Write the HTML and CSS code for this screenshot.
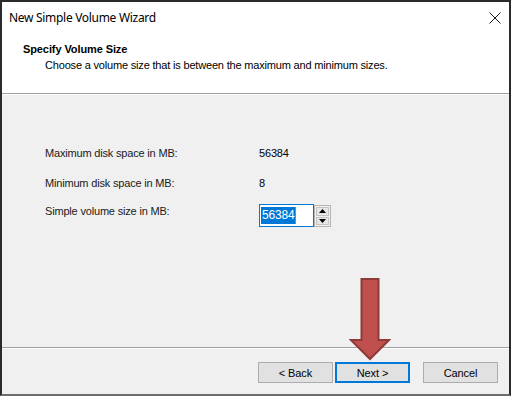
FILE: index.html
```html
<!DOCTYPE html>
<html lang="en">
<head>
    <meta charset="UTF-8">
    <title>New Simple Volume Wizard</title>
    <link rel="stylesheet" href="styles.css">
</head>
<body>
    <div class="window">
        <div class="titlebar">
            <span class="title">New Simple Volume Wizard</span>
            <svg class="close" width="12" height="12" viewBox="0 0 12 12">
                <path d="M0.5 0.5 L11.5 11.5 M11.5 0.5 L0.5 11.5" stroke="#1a1a1a" stroke-width="1" fill="none"/>
            </svg>
        </div>

        <div class="header">
            <h1>Specify Volume Size</h1>
            <p>Choose a volume size that is between the maximum and minimum sizes.</p>
        </div>

        <div class="content">
            <div class="row">
                <span class="label">Maximum disk space in MB:</span>
                <span class="value">56384</span>
            </div>
            <div class="row">
                <span class="label">Minimum disk space in MB:</span>
                <span class="value">8</span>
            </div>
            <div class="row row-input">
                <span class="label">Simple volume size in MB:</span>
                <div class="spinner">
                    <div class="field"><span class="selected">56384</span><span class="caret"></span></div>
                    <div class="spin-buttons">
                        <span class="spin-btn">
                            <svg width="7" height="4" viewBox="0 0 7 4"><path d="M3.5 0 L7 4 H0 Z" fill="#000"/></svg>
                        </span>
                        <span class="spin-btn">
                            <svg width="7" height="4" viewBox="0 0 7 4"><path d="M0 0 H7 L3.5 4 Z" fill="#000"/></svg>
                        </span>
                    </div>
                </div>
            </div>
        </div>

        <div class="footer">
            <button class="btn">&lt; Back</button>
            <button class="btn btn-default">Next &gt;</button>
            <button class="btn btn-cancel">Cancel</button>
        </div>

        <!-- callout arrow pointing at Next -->
        <svg class="arrow" width="42" height="86" viewBox="0 0 42 86">
            <path d="M12.5 2 H29.5 V63 H40 L21 82 L2 63 H12.5 Z" fill="#c0504d" stroke="#8e3a38" stroke-width="2" stroke-linejoin="miter"/>
        </svg>
    </div>
</body>
</html>
```

FILE: styles.css
```css
* {
    margin: 0;
    padding: 0;
    box-sizing: border-box;
}

body {
    font-family: 'Liberation Sans', Arial, sans-serif;
    font-size: 11px;
    letter-spacing: -0.18px;
    color: #000;
    background-color: #2b2b2b;
}

.window {
    position: relative;
    width: 511px;
    height: 396px;
    display: flex;
    flex-direction: column;
    background-color: #f0f0f0;
    border-top: 2px solid #2b2b2b;
    border-left: 2px solid #2b2b2b;
    border-right: 2px solid #2b2b2b;
    border-bottom: 2px solid #6d6d6d;
}

.titlebar {
    height: 30px;
    display: flex;
    align-items: center;
    justify-content: space-between;
    padding: 0 8px 0 7px;
    background-color: #fff;
}

.title {
    font-family: 'Noto Sans', 'Open Sans', sans-serif;
    font-size: 12px;
    letter-spacing: -0.3px;
    color: #000;
}

.close {
    display: block;
    margin-top: 1px;
}

.header {
    height: 62px;
    padding: 10px 0 0 21px;
    background-color: #fff;
    border-bottom: 1px solid #a0a0a0;
}

.header h1 {
    font-size: 11px;
    font-weight: bold;
    line-height: 14px;
    letter-spacing: -0.1px;
}

.header p {
    margin-top: 2px;
    padding-left: 22px;
    line-height: 14px;
}

.content {
    flex: 1;
    padding: 51px 0 0 43px;
    border-top: 1px solid #fff;
}

.row {
    display: flex;
    line-height: 14px;
    margin-bottom: 16px;
}

.label {
    width: 214px;
    color: #1a1a1a;
}

.row-input {
    margin-top: -2px;
}

.row-input .label {
    padding-top: 0;
}

.spinner {
    display: flex;
    align-items: flex-start;
}

.field {
    width: 55px;
    height: 23px;
    border: 1px solid #0078d7;
    background-color: #fff;
    padding: 2px 0 0 1px;
    display: flex;
    align-items: flex-start;
}

.selected {
    background-color: #0078d7;
    color: #fff;
    font-size: 12px;
    line-height: 17px;
    padding: 0 1px;
}

.caret {
    width: 1px;
    height: 17px;
    background-color: #e07020;
}

.spin-buttons {
    width: 17px;
    height: 22px;
    margin-top: 1px;
    border: 1px solid #b4b4b4;
    background-color: #f0f0f0;
    display: flex;
    flex-direction: column;
    gap: 1px;
    padding: 1px;
}

.spin-btn {
    flex: 1;
    display: flex;
    align-items: center;
    justify-content: center;
    background-color: #e6e6e6;
    border: 1px solid #c4c4c4;
}

.footer {
    height: 47px;
    display: flex;
    justify-content: flex-end;
    align-items: flex-start;
    padding: 14px 11px 0 0;
    border-top: 1px solid #a0a0a0;
    box-shadow: inset 0 1px 0 #fff;
}

.btn {
    width: 75px;
    height: 21px;
    font-family: 'Liberation Sans', Arial, sans-serif;
    font-size: 11px;
    letter-spacing: -0.1px;
    color: #000;
    background-color: #e1e1e1;
    border: 1px solid #adadad;
}

.btn-default {
    margin-left: 2px;
    border: 2px solid #0078d7;
}

.btn-cancel {
    margin-left: 13px;
}

.arrow {
    position: absolute;
    left: 347px;
    top: 275px;
}
```
